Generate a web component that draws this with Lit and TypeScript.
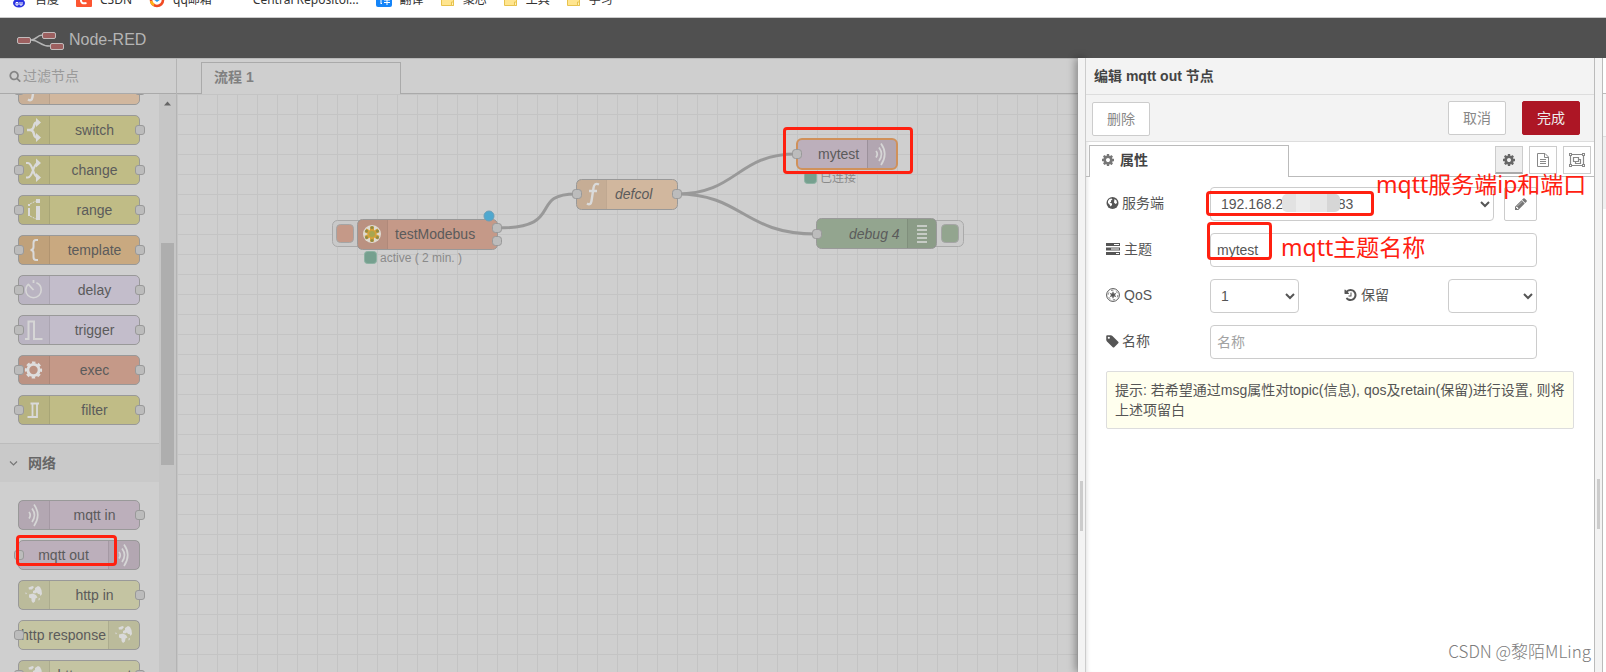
import { LitElement, html, svg, css, nothing } from "lit";
import { customElement, property } from "lit/decorators.js";
import { classMap } from "lit/directives/class-map.js";

const COG =
  "M1024 896q0-106-75-181t-181-75-181 75-75 181 75 181 181 75 181-75 75-181zm512-109v222q0 12-8 23t-20 13l-185 28q-19 54-39 91 35 50 107 138 10 12 10 25t-9 23q-27 37-99 108t-94 71q-12 0-26-9l-138-108q-44 23-91 38-16 136-29 186-7 28-36 28h-222q-14 0-24.5-8.5t-11.5-21.5l-28-184q-49-16-90-37l-141 107q-10 9-25 9-14 0-25-11-126-114-165-168-7-10-7-23 0-12 8-23 15-21 51-66.5t54-70.5q-27-50-41-99l-183-27q-13-2-21-12.5t-8-23.5v-222q0-12 8-23t19-13l186-28q14-46 39-92-40-57-107-138-10-12-10-24 0-10 9-23 26-36 98.5-107.5t94.5-71.5q13 0 26 10l138 107q44-23 91-38 16-136 29-186 7-28 36-28h222q14 0 24.5 8.5t11.5 21.5l28 184q49 16 90 37l142-107q9-9 24-9 13 0 25 10 129 119 165 170 7 8 7 22 0 12-8 23-15 21-51 66.5t-54 70.5q26 50 41 98l183 28q13 2 21 12.5t8 23.5z";
const SEARCH =
  "M1216 832q0-185-131.5-316.5t-316.5-131.5-316.5 131.5-131.5 316.5 131.5 316.5 316.5 131.5 316.5-131.5 131.5-316.5zm512 832q0 52-38 90t-90 38q-54 0-90-38l-343-342q-179 124-399 124-143 0-273.5-55.5t-225-150-150-225-55.5-273.5 55.5-273.5 150-225 225-150 273.5-55.5 273.5 55.5 225 150 150 225 55.5 273.5q0 220-124 399l343 343q37 37 37 90z";
const PENCIL =
  "M491 1536l91-91-235-235-91 91v107h128v128h107zm523-928q0-22-22-22-10 0-17 7l-542 542q-7 7-7 17 0 22 22 22 10 0 17-7l542-542q7-7 7-17zm-54-192l416 416-832 832h-416v-416zm683 96q0 53-37 90l-166 166-416-416 166-165q36-38 90-38 53 0 91 38l235 234q37 39 37 91z";
const TAG =
  "M576 448q0-53-37.5-90.5t-90.5-37.5-90.5 37.5-37.5 90.5 37.5 90.5 90.5 37.5 90.5-37.5 37.5-90.5zm1067 576q0 53-37 90l-491 492q-39 37-91 37-53 0-90-37l-715-716q-38-37-64.5-101t-26.5-117v-416q0-52 38-90t90-38h416q53 0 117 26.5t102 64.5l715 714q37 39 37 91z";
const HISTORY =
  "M1664 896q0 156-61 298t-164 245-245 164-298 61q-172 0-327-72.5t-264-204.5q-7-10-6.5-22.5t8.5-20.5l137-138q10-9 25-9 16 2 23 12 73 95 179 147t225 52q104 0 198.5-40.5t163.5-109.5 109.5-163.5 40.5-198.5-40.5-198.5-109.5-163.5-163.5-109.5-198.5-40.5q-98 0-188 35.5t-160 101.5l137 138q31 30 14 69-17 40-59 40h-448q-26 0-45-19t-19-45v-448q0-42 40-59 39-17 69 14l130 129q107-101 244.5-156.5t284.5-55.5q156 0 298 61t245 164 164 245 61 298zm-640-288v448q0 14-9 23t-23 9h-320q-14 0-23-9t-9-23v-64q0-14 9-23t23-9h224v-352q0-14 9-23t23-9h64q14 0 23 9t9 23z";

/* Node icons, each drawn in a 32 x 30 box. */
const glyphs: Record<string, unknown> = {
  fn: svg`<path d="M22 5.5c-3.500-1.500-5 0-5.500 3.500l-2 13c-.5 3-2 4-4.500 2.500M12 12h8" fill="none" stroke="#dadada" stroke-width="2.400"/>`,
  switch: svg`<path d="M9 15h4M12 15c6 0 2-7.500 7-7.500M12 15c6 0 2 7.500 7 7.500" fill="none" stroke="#dadada" stroke-width="2.400"/><path d="M18 3l5 4.500-5 4.500zM18 18l5 4.500-5 4.500z" fill="#dadada"/>`,
  change: svg`<path d="M8 8h2c5 0 5 14.500 10 14.500M8 22.500h2c5 0 5-14.500 10-14.500" fill="none" stroke="#dadada" stroke-width="2.200"/><path d="M18 3.500l5 4.500-5 4.500zM18 18l5 4.500-5 4.500z" fill="#dadada"/>`,
  range: svg`<path d="M10 9h2v2h-2zM10 13h2v8h-2zM18 4h4v4h-4zM18 11h4v14h-4z" fill="#dadada"/><path d="M12 9l6-3M12 21l6 3" stroke="#dadada" stroke-dasharray="2 1" fill="none"/>`,
  template: svg`<path d="M20 5h-2c-2 0-2.500 1-2.500 3v4c0 2-1 3-3 3 2 0 3 1 3 3v4c0 2 .5 3 2.500 3h2" fill="none" stroke="#dadada" stroke-width="2"/>`,
  delay: svg`<circle cx="15.500" cy="15" r="7.700" fill="none" stroke="#d6d6d6" stroke-width="1.600" stroke-dasharray="37 8" stroke-dashoffset="-39"/><path d="M10.500 9.500l5 5.500M15.500 5v3" stroke="#d6d6d6" stroke-width="1.800"/>`,
  trigger: svg`<path d="M7 24h3.500v-17.500h5.500v17.500h8.500" fill="none" stroke="#d6d6d6" stroke-width="2"/>`,
  exec: svg`<g fill="none" stroke="#dedede"><circle cx="15.500" cy="15" r="5.600" stroke-width="2.800"/><circle cx="15.500" cy="15" r="7.500" stroke-width="2.200" stroke-dasharray="3.400 2.490" stroke-dashoffset="1.700"/></g>`,
  filter: svg`<path d="M9.500 22h5v-13.500h6.500M14.500 8.500h-2M12 22h7v-13.500" fill="none" stroke="#dadada" stroke-width="1.800"/>`,
  mqtt: svg`<path d="M11 12q2.500 3 0 6.500M14 8.500q5 6.500 0 13.500M16 4.500q7.500 10.500 0 21.500" fill="none" stroke="#d6d6d6" stroke-width="1.700"/>`,
  globe: svg`<path d="M10.500 7.500l4-1.500 1.500 1-2 2.500h-3zM15 11l2-1 0-2 3-2 2 1 1.500 3 .5 4-1.500 2-1-2-1.500 0-1-1.500-2 1-2-.5zM11 14.500l4-1 3 1.500 1.500 2.500-2 1-.5 3-2 1.500-1.500-2v-2.500l-2.500-1zM7 12.500l2 .5-1 1.500zM20.500 18.500l1.500-.5-.5 2-1 .5z" fill="#dadada"/>`,
};

@customElement("palette-node")
class PaletteNode extends LitElement {
  @property() label = "";
  @property() kind = "fn";
  @property() tone = "olive";
  @property({ type: Boolean }) flip = false;
  @property() ports = "both";

  static styles = css`
    :host { display: block; }
    .node {
      position: relative;
      display: flex;
      box-sizing: border-box;
      height: 30px;
      border: 1px solid #999;
      border-radius: 5px;
      color: #5b5b5b;
      font-size: 14px;
    }
    .flip { flex-direction: row-reverse; }
    .icon {
      flex: none;
      width: 30px;
      background: rgba(0, 0, 0, 0.045);
      border-right: 1px solid rgba(0, 0, 0, 0.08);
    }
    .flip .icon { border-right: 0; border-left: 1px solid rgba(0, 0, 0, 0.08); }
    .icon svg { display: block; margin: -1px; }
    .label { flex: 1; text-align: center; line-height: 28px; white-space: nowrap; }
    .port {
      position: absolute;
      top: 9px;
      box-sizing: border-box;
      width: 10px;
      height: 10px;
      border: 1px solid #999;
      border-radius: 3px;
      background: #bcbcbc;
    }
    .in { left: -5px; }
    .out { right: -6px; }
    .olive { background: #c0bc86; }
    .peach { background: #d1b79e; }
    .amber { background: #c9a980; }
    .lilac { background: #c3bdcb; }
    .brick { background: #c59988; }
    .mauve { background: #bcafbb; }
    .straw { background: #c4c4a2; }
  `;

  render() {
    return html`<div class=${classMap({ node: true, flip: this.flip, [this.tone]: true })}>
      <div class="icon"><svg width="32" height="30" viewBox="0 0 32 30">${glyphs[this.kind]}</svg></div>
      <div class="label">${this.label}</div>
      ${this.ports !== "out" ? html`<i class="port in"></i>` : nothing}
      ${this.ports !== "in" ? html`<i class="port out"></i>` : nothing}
    </div>`;
  }
}

@customElement("app-root")
class AppRoot extends LitElement {
  static styles = css`
    :host {
      display: flex;
      flex-direction: column;
      height: 100vh;
      overflow: hidden;
      background: #fff;
      font-family: "Liberation Sans", "Noto Sans CJK SC", sans-serif;
      font-size: 14px;
      line-height: 20px;
      color: #555;
    }
    * { box-sizing: border-box; }
    svg { display: block; flex: none; }
    a { color: inherit; text-decoration: none; }

    .bookmarks {
      flex: none;
      display: flex;
      align-items: flex-start;
      height: 18px;
      padding-left: 11px;
      border-bottom: 1px solid #ccc;
      overflow: hidden;
      font-family: "Noto Sans", "Noto Sans CJK SC", sans-serif;
      font-size: 12px;
      line-height: 18px;
      color: #333;
    }
    .bookmark { display: flex; gap: 8px; margin: -9px 17px 0 0; white-space: nowrap; }
    .bookmark.plain { margin-left: 24px; }

    header {
      flex: none;
      display: flex;
      align-items: center;
      gap: 4px;
      height: 40px;
      padding: 3px 16px 0;
      background: #505050;
      color: #b5b5b5;
      font-size: 16px;
    }
    main { flex: 1; display: flex; min-height: 0; }

    .palette {
      flex: none;
      display: flex;
      flex-direction: column;
      width: 177px;
      border-right: 1px solid #b4b4b4;
      background: #cfcfcf;
    }
    .search {
      flex: none;
      display: flex;
      align-items: center;
      gap: 2px;
      height: 36px;
      padding-left: 9px;
      border-top: 1px solid #b8b8b8;
      border-bottom: 1px solid #aaa;
    }
    .search input {
      width: 130px;
      padding: 0;
      border: 0;
      outline: 0;
      background: none;
      font: inherit;
    }
    .search input::placeholder { color: #9a9a9a; }
    .scroller { flex: 1; display: flex; min-height: 0; overflow: hidden; }
    .groups { flex: 1; }
    .list { display: flex; flex-direction: column; gap: 10px; padding: 18px 19px 18px 18px; }
    .list.scrolled { margin-top: -19px; padding-top: 0; }
    .category {
      display: flex;
      align-items: center;
      gap: 10px;
      height: 39px;
      padding-left: 9px;
      border-top: 1px solid #bcbcbc;
      background: #c9c9c9;
      color: #666;
      font-weight: bold;
    }
    .bar { flex: none; width: 17px; padding: 7px 2px 0; background: #c6c6c6; }
    .bar svg { margin: 0 auto; }
    .thumb { width: 13px; height: 222px; margin-top: 137px; background: #aeaeae; }

    .workspace { flex: 1; display: flex; flex-direction: column; min-width: 0; background: #cfcfcf; }
    .flow-tabs {
      flex: none;
      display: flex;
      height: 36px;
      padding: 3px 0 0 24px;
      border-top: 1px solid #b8b8b8;
      border-bottom: 1px solid #aaa;
    }
    .flow-tab {
      width: 200px;
      height: 32px;
      padding-left: 12px;
      border: 1px solid #aaa;
      border-bottom: 0;
      background: #cfcfcf;
      color: #808080;
      font-weight: bold;
      line-height: 29px;
    }
    .canvas {
      position: relative;
      flex: 1;
      overflow: hidden;
      background-image: linear-gradient(to right, #c4c4c4 1px, transparent 1px),
        linear-gradient(#c4c4c4 1px, transparent 1px);
      background-size: 20px 20px;
    }
    .canvas text { font-size: 14px; fill: #5b5b5b; }
    .canvas .italic { font-style: italic; }
    .canvas .status { font-size: 12px; fill: #8a8a8a; }
    .wire { fill: none; stroke: #999; stroke-width: 3; }
    .port { fill: #bcbcbc; stroke: #999; }

    .mark {
      position: absolute;
      border: 3px solid #ff2010;
      border-radius: 4px;
      pointer-events: none;
    }
    .note {
      position: absolute;
      color: #ff2010;
      font-family: "Noto Sans", "Noto Sans CJK SC", sans-serif;
      font-size: 23px;
      line-height: 32px;
      white-space: nowrap;
      pointer-events: none;
    }
    .mark-topic-node { left: 606px; top: 33px; width: 130px; height: 47px; }
    .marked { position: relative; }
    .mark-mqtt-out { left: -2px; top: -5px; width: 101px; height: 31px; }
    .mark-server { left: -4px; top: 4px; width: 168px; height: 25px; }
    .mark-topic { left: -3px; top: -11px; width: 65px; height: 38px; }
    .note-server { left: 166px; top: -19px; }
    .note-topic { left: 71px; top: -2px; }
    .mosaic {
      position: absolute;
      left: 72px;
      top: 7px;
      width: 58px;
      height: 18px;
      border-radius: 5px;
      background: linear-gradient(90deg, #e2e2e2 0 14px, #ececec 14px 28px, #e6e6e6 28px 45px, #d6d6d6 45px);
    }

    .separator {
      flex: none;
      display: flex;
      align-items: flex-start;
      justify-content: center;
      width: 8px;
      padding-top: 423px;
      border-right: 1px solid #ccc;
      background: #f3f3f3;
    }
    .separator::before { content: ""; width: 3px; height: 50px; background: #ccc; }
    .tray-edge { position: relative; box-shadow: -2px 0 8px rgba(0, 0, 0, 0.4); }
    .sidebar-edge { padding-top: 421px; border-right-color: #bbb; }

    .tray {
      position: relative;
      flex: none;
      width: 509px;
      border-right: 1px solid #bbb;
      background: #fff;
      box-shadow: inset 4px 0 4px -3px rgba(0, 0, 0, 0.12);
    }
    .tray h1 {
      height: 37px;
      margin: 0;
      padding-left: 8px;
      border-bottom: 1px solid #ddd;
      background: #f3f3f3;
      color: #444;
      font-size: 14px;
      line-height: 37px;
    }
    .toolbar {
      display: flex;
      gap: 16px;
      height: 47px;
      padding: 6px 14px 0 6px;
      border-bottom: 1px solid #ddd;
      background: #f3f3f3;
    }
    button { font: inherit; padding: 0; }
    .btn {
      width: 58px;
      height: 34px;
      border: 1px solid #ccc;
      border-radius: 2px;
      background: #fff;
      color: #888;
    }
    .btn.first { margin: 1px auto 0 0; }
    .btn.primary { border-color: #ad1625; background: #ad1625; color: #eee; }
    .tabs {
      display: flex;
      gap: 6px;
      height: 35px;
      padding: 3px 3px 0;
      border-bottom: 1px solid #bbb;
    }
    .tab {
      display: flex;
      align-items: center;
      gap: 6px;
      width: 200px;
      height: 32px;
      margin-right: auto;
      padding: 0 0 3px 12px;
      border: 1px solid #bbb;
      border-bottom: 0;
      background: #fff;
      color: #444;
      font-weight: bold;
    }
    .tool {
      display: grid;
      place-items: center;
      width: 28px;
      height: 28px;
      margin-top: 1px;
      border: 1px solid #ccc;
      background: #fff;
    }
    .tool.on { border-bottom: 2px solid #aaa; background: #eee; }

    form { display: flex; flex-direction: column; gap: 12px; padding: 10px 20px; }
    .row { display: flex; height: 34px; padding-right: 37px; }
    .row label { flex: none; display: flex; align-items: center; gap: 3px; width: 104px; padding-bottom: 2px; }
    .field { position: relative; flex: 1; display: flex; gap: 10px; }
    input.box, select {
      flex: 1;
      min-width: 0;
      height: 34px;
      border: 1px solid #ccc;
      border-radius: 4px;
      background-color: #fff;
      color: #555;
      font: inherit;
    }
    input.box { padding: 0 6px; outline: 0; }
    input.box::placeholder { color: #a2a2a2; }
    select { padding: 0 6px; }
    select.short { flex: none; width: 89px; }
    .row .retain { width: 104px; margin-left: auto; }
    .edit {
      display: grid;
      place-items: center;
      width: 33px;
      height: 34px;
      border: 1px solid #ccc;
      border-radius: 2px;
      background: #fff;
    }
    .tips {
      margin: 0;
      padding: 8px;
      border: 1px solid #ddd;
      border-radius: 2px;
      background: #ffffee;
    }
    .watermark {
      position: absolute;
      right: 3px;
      bottom: 8px;
      color: #7c7c7c;
      font-family: "Noto Sans CJK SC", sans-serif;
      font-weight: 300;
      font-size: 17px;
      line-height: 26px;
    }

    .sidebar { flex: 1; max-width: 3px; background: #fff; }
    .sidebar-tabs { height: 36px; border-bottom: 1px solid #bbb; }
    .sidebar-tools { height: 43px; border-bottom: 1px solid #ddd; background: #f8f8f8; }
    .sidebar-tree { height: 72px; background: #f0f0f0; }
  `;

  private fa(path: string, size: number, fill: string, box = "0 0 1792 1792") {
    return html`<svg width=${size} height=${size} viewBox=${box}><path d=${path} fill=${fill}></path></svg>`;
  }

  private folder() {
    return html`<svg width="14" height="18" viewBox="0 0 14 18"><path d="M.5 4.500h5l2 2h5v8h-12z" fill="#ffe58f" stroke="#e8c34e"/><path d="M10.500 11h2v3.500h-2z" fill="#fff2b8" stroke="#e8c34e"/></svg>`;
  }

  private bookmarks() {
    return html`<nav class="bookmarks">
      <a class="bookmark" href="#"><svg width="16" height="18" viewBox="0 0 16 18"><ellipse cx="8" cy="12" rx="6" ry="4.500" fill="#2932e1"/><circle cx="3.500" cy="6" r="2" fill="#2932e1"/><circle cx="12.500" cy="6" r="2" fill="#2932e1"/><path d="M5 11.500h2v2.500h-2zM9 11v3h2v-3" fill="none" stroke="#fff"/></svg>百度</a>
      <a class="bookmark" href="#"><svg width="16" height="18" viewBox="0 0 16 18"><rect width="16" height="16" rx="1" fill="#fc5531"/><path d="M11.500 5.500q-6-2-6.500 3t5.500 3.500" fill="none" stroke="#fff" stroke-width="2"/></svg>CSDN</a>
      <a class="bookmark" href="#"><svg width="16" height="18" viewBox="0 0 16 18"><path d="M2 9a6 6 0 0 0 12 0" fill="none" stroke="#f04a23" stroke-width="2.600"/><path d="M2 10a6 6 0 0 0 3 4" fill="none" stroke="#ffb21a" stroke-width="2.600"/><path d="M4 8l4 3 4-3v-4h-8z" fill="#2a9be6"/></svg>qq邮箱</a>
      <a class="bookmark plain" href="#">Central Repositor...</a>
      <a class="bookmark" href="#"><svg width="16" height="18" viewBox="0 0 16 18"><rect width="16" height="16" rx="2" fill="#1484f8"/><path d="M3 8h2v5l1-1M8 9h6M8 11.500h6M11 6v8" fill="none" stroke="#fff"/></svg>翻译</a>
      ${["聚芯", "工具", "学习"].map((t) => html`<a class="bookmark folder" href="#">${this.folder()}${t}</a>`)}
    </nav>`;
  }

  private logo() {
    return html`<svg width="49" height="20" viewBox="0 0 49 20">
      <g fill="none" stroke="#b5b5b5" stroke-width="1.500"><path d="M15 10c6 0 5-5 12-5M15 10c9 0 8 6 19 6"/></g>
      <g fill="#9d6060" stroke="#c2bcbc"><rect x="1.500" y="7.500" width="13" height="6" rx="1.500"/><rect x="26.500" y="2.500" width="13" height="6" rx="1.500"/><rect x="34.500" y="13.500" width="13" height="6" rx="1.500"/></g>
    </svg>`;
  }

  private palette() {
    const functions = [
      ["", "fn", "peach"], ["switch", "switch", "olive"], ["change", "change", "olive"],
      ["range", "range", "olive"], ["template", "template", "amber"], ["delay", "delay", "lilac"],
      ["trigger", "trigger", "lilac"], ["exec", "exec", "brick"], ["filter", "filter", "olive"],
    ];
    return html`<aside class="palette">
      <div class="search">${this.fa(SEARCH, 12, "#858585")}<input aria-label="过滤节点" placeholder="过滤节点" /></div>
      <div class="scroller">
        <div class="groups">
          <div class="list scrolled">
            ${functions.map(([label, kind, tone]) => html`<palette-node label=${label} kind=${kind} tone=${tone}></palette-node>`)}
          </div>
          <div class="category">
            <svg width="9" height="7" viewBox="0 0 9 7"><path d="M1 1.500l3.500 3.500 3.500-3.500" fill="none" stroke="#777" stroke-width="1.200"/></svg>网络
          </div>
          <div class="list">
            <palette-node label="mqtt in" kind="mqtt" tone="mauve" ports="out"></palette-node>
            <div class="marked">
              <palette-node label="mqtt out" kind="mqtt" tone="mauve" ports="in" flip></palette-node>
              <div class="mark mark-mqtt-out"></div>
            </div>
            <palette-node label="http in" kind="globe" tone="straw" ports="out"></palette-node>
            <palette-node label="http response" kind="globe" tone="straw" ports="in" flip></palette-node>
            <palette-node label="http request" kind="globe" tone="straw"></palette-node>
          </div>
        </div>
        <div class="bar">
          <svg width="7" height="5" viewBox="0 0 7 5"><path d="M0 4.500l3.500-4 3.500 4z" fill="#666"/></svg>
          <div class="thumb"></div>
        </div>
      </div>
    </aside>`;
  }

  private port(x: number, y: number) {
    return svg`<rect class="port" x=${x - 4.5} y=${y - 4.5} width="9" height="9" rx="3"/>`;
  }

  /* Flow diagram; coordinates count from the top left corner of the grid. */
  private canvas() {
    const shade = "rgba(0,0,0,.05)";
    return html`<div class="canvas">
      <svg width="900" height="400" viewBox="0 0 900 400">
        <path class="wire" d="M320 134c70 0 30-34 79-34M500 100c60 0 60-40 119-40M500 100c66 0 66 40 139 40"/>

        <rect x="155.500" y="126.500" width="40" height="26" rx="5" fill="#c9c9c9" stroke="#aaa"/>
        <rect x="159.500" y="130.500" width="17" height="18" rx="4" fill="#c59988" stroke="#a5a5a5"/>
        <rect x="180.500" y="125.500" width="140" height="30" rx="5" fill="#c59988" stroke="#999"/>
        <path d="M210 126v29h-25q-4 0-4-4v-21q0-4 4-4z" fill=${shade}/><path d="M210.500 126v29" stroke="rgba(0,0,0,.1)"/>
        <circle cx="195" cy="140" r="9" fill="#dedad0"/>
        <path d="M195 132.500v15M188.500 136.300l13 7.500M201.500 136.300l-13 7.500" stroke="#d3a03a" stroke-width="4"/>
        <circle cx="195" cy="140" r="3" fill="#a8a650"/>
        <g fill="#8f8a45"><circle cx="195" cy="133.500" r="1.500"/><circle cx="195" cy="146.500" r="1.500"/><circle cx="189.500" cy="137" r="1.500"/><circle cx="200.500" cy="137" r="1.500"/><circle cx="189.500" cy="143.500" r="1.500"/><circle cx="200.500" cy="143.500" r="1.500"/></g>
        ${this.port(320, 134)}${this.port(320, 147)}
        <circle cx="312" cy="122" r="5" fill="#4fa8cf" stroke="#6a9fb8"/>
        <text x="218" y="145">testModebus</text>
        <rect x="187.500" y="157.500" width="12" height="12" rx="3" fill="#76a08f" stroke="#8db3a3"/>
        <text class="status" x="203" y="168">active ( 2 min. )</text>

        <rect x="399.500" y="85.500" width="101" height="30" rx="5" fill="#d1b79e" stroke="#999"/>
        <path d="M429 86v29h-25q-4 0-4-4v-21q0-4 4-4z" fill=${shade}/><path d="M429.500 86v29" stroke="rgba(0,0,0,.08)"/>
        <g transform="translate(400 85)">${glyphs.fn}</g>
        ${this.port(400, 100)}${this.port(500, 100)}
        <text class="italic" x="438" y="105">defcol</text>

        <rect x="620" y="45" width="100" height="30" rx="5" fill="#bcafbb" stroke="#d0915a" stroke-width="2"/>
        <path d="M690 46h25q4 0 4 4v20q0 4-4 4h-25z" fill=${shade}/><path d="M690.500 46v28" stroke="rgba(0,0,0,.12)"/>
        <g transform="translate(688 45)">${glyphs.mqtt}</g>
        ${this.port(620, 60)}
        <text x="641" y="65">mytest</text>
        <rect x="627.500" y="77.500" width="12" height="12" rx="3" fill="#76a08f" stroke="#8db3a3"/>
        <text class="status" x="643" y="88">已连接</text>

        <rect x="745.500" y="126.500" width="41" height="26" rx="5" fill="#cbcbcb" stroke="#aaa"/>
        <rect x="764.500" y="130.500" width="17" height="18" rx="4" fill="#93a58f" stroke="#a5a5a5"/>
        <rect x="639.500" y="124.500" width="120" height="30" rx="5" fill="#93a58f" stroke="#999"/>
        <path d="M730 125h25q4 0 4 4v21q0 4-4 4h-25z" fill=${shade}/><path d="M730.500 125v29" stroke="rgba(0,0,0,.08)"/>
        <path d="M740 132h10M740 136h10M740 140h10M740 144h10M740 148h10" stroke="#dadada" stroke-width="1.500"/>
        ${this.port(640, 140)}
        <text class="italic" x="672" y="145">debug 4</text>
      </svg>
      <div class="mark mark-topic-node"></div>
    </div>`;
  }

  private tray() {
    const dark = "#555";
    return html`<section class="tray">
      <h1>编辑 mqtt out 节点</h1>
      <div class="toolbar">
        <button class="btn first">删除</button>
        <button class="btn">取消</button>
        <button class="btn primary">完成</button>
      </div>
      <div class="tabs">
        <button class="tab">${this.fa(COG, 12, "#777", "0 128 1536 1536")}属性</button>
        <button class="tool on" aria-label="属性">${this.fa(COG, 12, "#666", "0 128 1536 1536")}</button>
        <button class="tool" aria-label="描述"><svg width="14" height="16" viewBox="0 0 14 16"><path d="M1.500 1.500h7.500l3.500 3.500v9.500h-11zM8.500 1.500v4h4M4 7.500h6M4 9.500h6M4 11.500h6" fill="none" stroke="#888"/></svg></button>
        <button class="tool" aria-label="外观"><svg width="18" height="16" viewBox="0 0 18 16"><path d="M2.500 2.500h13v11h-13zM5.500 5.500h5v4h-5zM10.500 7.500h2v4h-5v-2" fill="none" stroke="#888" stroke-width="1.200"/><g fill="#fff" stroke="#888"><rect x="1.500" y="1.500" width="2" height="2"/><rect x="14.500" y="1.500" width="2" height="2"/><rect x="1.500" y="12.500" width="2" height="2"/><rect x="14.500" y="12.500" width="2" height="2"/></g></svg></button>
      </div>
      <form>
        <div class="row">
          <label for="server"><svg width="13" height="12" viewBox="0 0 12 12"><circle cx="6" cy="6" r="6" fill=${dark}/><path d="M1.500 4l1.500-2 2-.5 1 1-1.500 1 0 1.500-1.500.5 2.500 1 0 1.500-1.500 1.500-1-2-1.500-1.500zM8 2l2 1.500.5 2.500-1.500 1-1.500-1.500z" fill="#fff"/></svg>服务端</label>
          <div class="field">
            <select id="server"><option>192.168.2${"\u00a0".repeat(14)}83</option></select>
            <button class="edit" type="button" aria-label="编辑">${this.fa(PENCIL, 14, "#777")}</button>
            <div class="mosaic"></div>
            <div class="mark mark-server"></div>
            <div class="note note-server">mqtt服务端ip和端口</div>
          </div>
        </div>
        <div class="row">
          <label for="topic"><svg width="15" height="12" viewBox="0 0 15 12"><path d="M0 0h14v3h-14zM0 4.500h14v3h-14zM0 9h14v3h-14z" fill=${dark}/><path d="M8 1.500h5M5 6h8M10 10.500h3" stroke="#fff"/></svg>主题</label>
          <div class="field">
            <input class="box" id="topic" value="mytest" />
            <div class="mark mark-topic"></div>
            <div class="note note-topic">mqtt主题名称</div>
          </div>
        </div>
        <div class="row">
          <label for="qos"><svg width="15" height="14" viewBox="0 0 15 14"><circle cx="7" cy="7" r="6.400" fill="none" stroke=${dark}/><circle cx="7" cy="7" r="4.800" fill="none" stroke=${dark} stroke-width=".7" stroke-dasharray="2.500 2.500"/><path d="M7 3.800v6.400M4.200 5.400l5.600 3.200M9.800 5.400l-5.600 3.200" stroke=${dark} stroke-width="1.200"/><circle cx="7" cy="7" r="1.800" fill=${dark}/></svg>QoS</label>
          <select class="short" id="qos"><option>1</option></select>
          <label class="retain" for="retain">${this.fa(HISTORY, 14, dark, "128 0 1664 1792")}保留</label>
          <select class="short" id="retain"><option></option></select>
        </div>
        <div class="row">
          <label for="name">${this.fa(TAG, 13, dark, "100 100 1600 1600")}名称</label>
          <div class="field"><input class="box" id="name" placeholder="名称" /></div>
        </div>
        <p class="tips">提示: 若希望通过msg属性对topic(信息), qos及retain(保留)进行设置, 则将上述项留白</p>
      </form>
      <div class="watermark">CSDN @黎陌MLing</div>
    </section>`;
  }

  render() {
    return html`
      ${this.bookmarks()}
      <header>${this.logo()}<span>Node-RED</span></header>
      <main>
        ${this.palette()}
        <section class="workspace">
          <div class="flow-tabs"><div class="flow-tab">流程 1</div></div>
          ${this.canvas()}
        </section>
        <div class="separator tray-edge"></div>
        ${this.tray()}
        <div class="separator sidebar-edge"></div>
        <aside class="sidebar">
          <div class="sidebar-tabs"></div>
          <div class="sidebar-tools"></div>
          <div class="sidebar-tree"></div>
        </aside>
      </main>
    `;
  }
}
